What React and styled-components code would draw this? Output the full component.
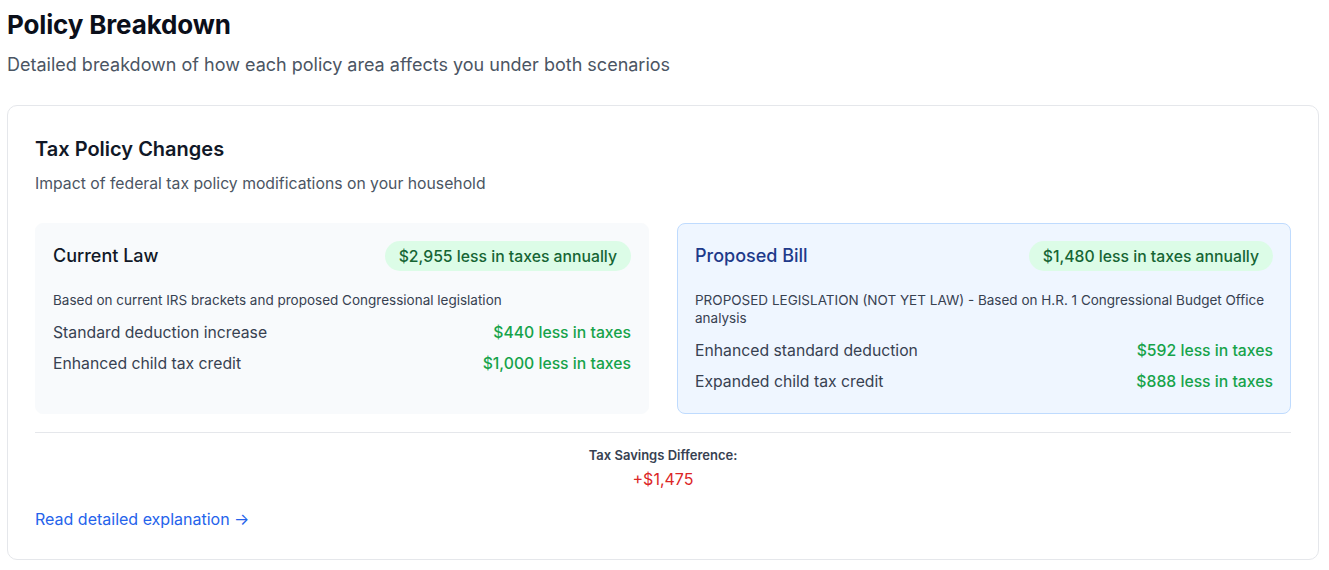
import React from 'react';
import styled, { createGlobalStyle } from 'styled-components';

const GlobalStyle = createGlobalStyle`
    * { box-sizing: border-box; }
    body {
        margin: 0;
        background: #ffffff;
        font-family: Inter, 'Noto Sans', sans-serif;
        color: #111827;
    }
`;

const scenarios = [
    {
        key: 'current',
        title: 'Current Law',
        badge: '$2,955 less in taxes annually',
        note: 'Based on current IRS brackets and proposed Congressional legislation',
        items: [
            { label: 'Standard deduction increase', value: '$440 less in taxes' },
            { label: 'Enhanced child tax credit', value: '$1,000 less in taxes' },
        ],
    },
    {
        key: 'proposed',
        title: 'Proposed Bill',
        badge: '$1,480 less in taxes annually',
        note: 'PROPOSED LEGISLATION (NOT YET LAW) - Based on H.R. 1 Congressional Budget Office analysis',
        items: [
            { label: 'Enhanced standard deduction', value: '$592 less in taxes' },
            { label: 'Expanded child tax credit', value: '$888 less in taxes' },
        ],
    },
];

const App = () => {
    return (
        <>
            <GlobalStyle />
            <Page>
                <PageTitle>Policy Breakdown</PageTitle>
                <PageSubtitle>Detailed breakdown of how each policy area affects you under both scenarios</PageSubtitle>

                <Card>
                    <CardTitle>Tax Policy Changes</CardTitle>
                    <CardSubtitle>Impact of federal tax policy modifications on your household</CardSubtitle>

                    <ScenarioGrid>
                        {scenarios.map((s) => (
                            <ScenarioBox key={s.key} $proposed={s.key === 'proposed'}>
                                <ScenarioHeader>
                                    <ScenarioTitle $proposed={s.key === 'proposed'}>{s.title}</ScenarioTitle>
                                    <Badge>{s.badge}</Badge>
                                </ScenarioHeader>
                                <ScenarioNote>{s.note}</ScenarioNote>
                                <ItemList>
                                    {s.items.map((item) => (
                                        <ItemRow key={item.label}>
                                            <ItemLabel>{item.label}</ItemLabel>
                                            <ItemValue>{item.value}</ItemValue>
                                        </ItemRow>
                                    ))}
                                </ItemList>
                            </ScenarioBox>
                        ))}
                    </ScenarioGrid>

                    <Difference>
                        <DifferenceLabel>Tax Savings Difference:</DifferenceLabel>
                        <DifferenceValue>+$1,475</DifferenceValue>
                    </Difference>

                    <ReadMore href="#">Read detailed explanation →</ReadMore>
                </Card>
            </Page>
        </>
    );
};

export default App;

// Styled Components
const Page = styled.div`
    padding: 9px 10px 10px 7px;
`;

const PageTitle = styled.h1`
    margin: 0;
    font-size: 26px;
    line-height: 32px;
    font-weight: 700;
    letter-spacing: -0.15px;
    color: #0b0f1a;
`;

const PageSubtitle = styled.p`
    margin: 10px 0 0;
    font-size: 18px;
    line-height: 28px;
    color: #4b5563;
`;

const Card = styled.div`
    margin-top: 26px;
    border: 1px solid #e5e7eb;
    border-radius: 10px;
    padding: 29px 27px 28px;
`;

const CardTitle = styled.h2`
    margin: 0;
    font-size: 20px;
    line-height: 28px;
    font-weight: 600;
    color: #111827;
`;

const CardSubtitle = styled.p`
    margin: 9px 0 0;
    font-size: 15.75px;
    line-height: 24px;
    color: #4b5563;
`;

const ScenarioGrid = styled.div`
    margin-top: 27px;
    display: grid;
    grid-template-columns: 1fr 1fr;
    gap: 28px;
`;

const ScenarioBox = styled.div`
    border-radius: 8px;
    padding: 17px 17px 19px;
    border: 1px solid ${(p) => (p.$proposed ? '#bfdbfe' : '#f8fafc')};
    background: ${(p) => (p.$proposed ? '#eff6ff' : '#f8fafc')};
`;

const ScenarioHeader = styled.div`
    display: flex;
    align-items: center;
    justify-content: space-between;
`;

const ScenarioTitle = styled.h3`
    margin: 0;
    font-size: 18px;
    line-height: 28px;
    font-weight: 500;
    color: ${(p) => (p.$proposed ? '#1e3a8a' : '#111827')};
`;

const Badge = styled.span`
    display: inline-flex;
    align-items: center;
    height: 30px;
    padding: 0 14px;
    border-radius: 999px;
    background: #dcfce7;
    color: #166534;
    font-size: 15.75px;
    font-weight: 500;
`;

const ScenarioNote = styled.p`
    margin: 20px 0 0;
    font-size: 13.5px;
    line-height: 18px;
    color: #374151;
`;

const ItemList = styled.div`
    margin-top: 12px;
    display: flex;
    flex-direction: column;
    gap: 7px;
`;

const ItemRow = styled.div`
    display: flex;
    justify-content: space-between;
    align-items: center;
    font-size: 15.75px;
    line-height: 24px;
`;

const ItemLabel = styled.span`
    color: #374151;
`;

const ItemValue = styled.span`
    color: #16a34a;
    font-weight: 500;
`;

const Difference = styled.div`
    margin-top: 18px;
    border-top: 1px solid #e5e7eb;
    padding-top: 13px;
    text-align: center;
`;

const DifferenceLabel = styled.div`
    font-size: 13px;
    line-height: 18px;
    font-weight: 600;
    color: #374151;
`;

const DifferenceValue = styled.div`
    margin-top: 3px;
    font-size: 16px;
    line-height: 24px;
    color: #dc2626;
`;

const ReadMore = styled.a`
    display: inline-block;
    margin-top: 16px;
    font-size: 16px;
    line-height: 24px;
    color: #2563eb;
    text-decoration: none;
`;
